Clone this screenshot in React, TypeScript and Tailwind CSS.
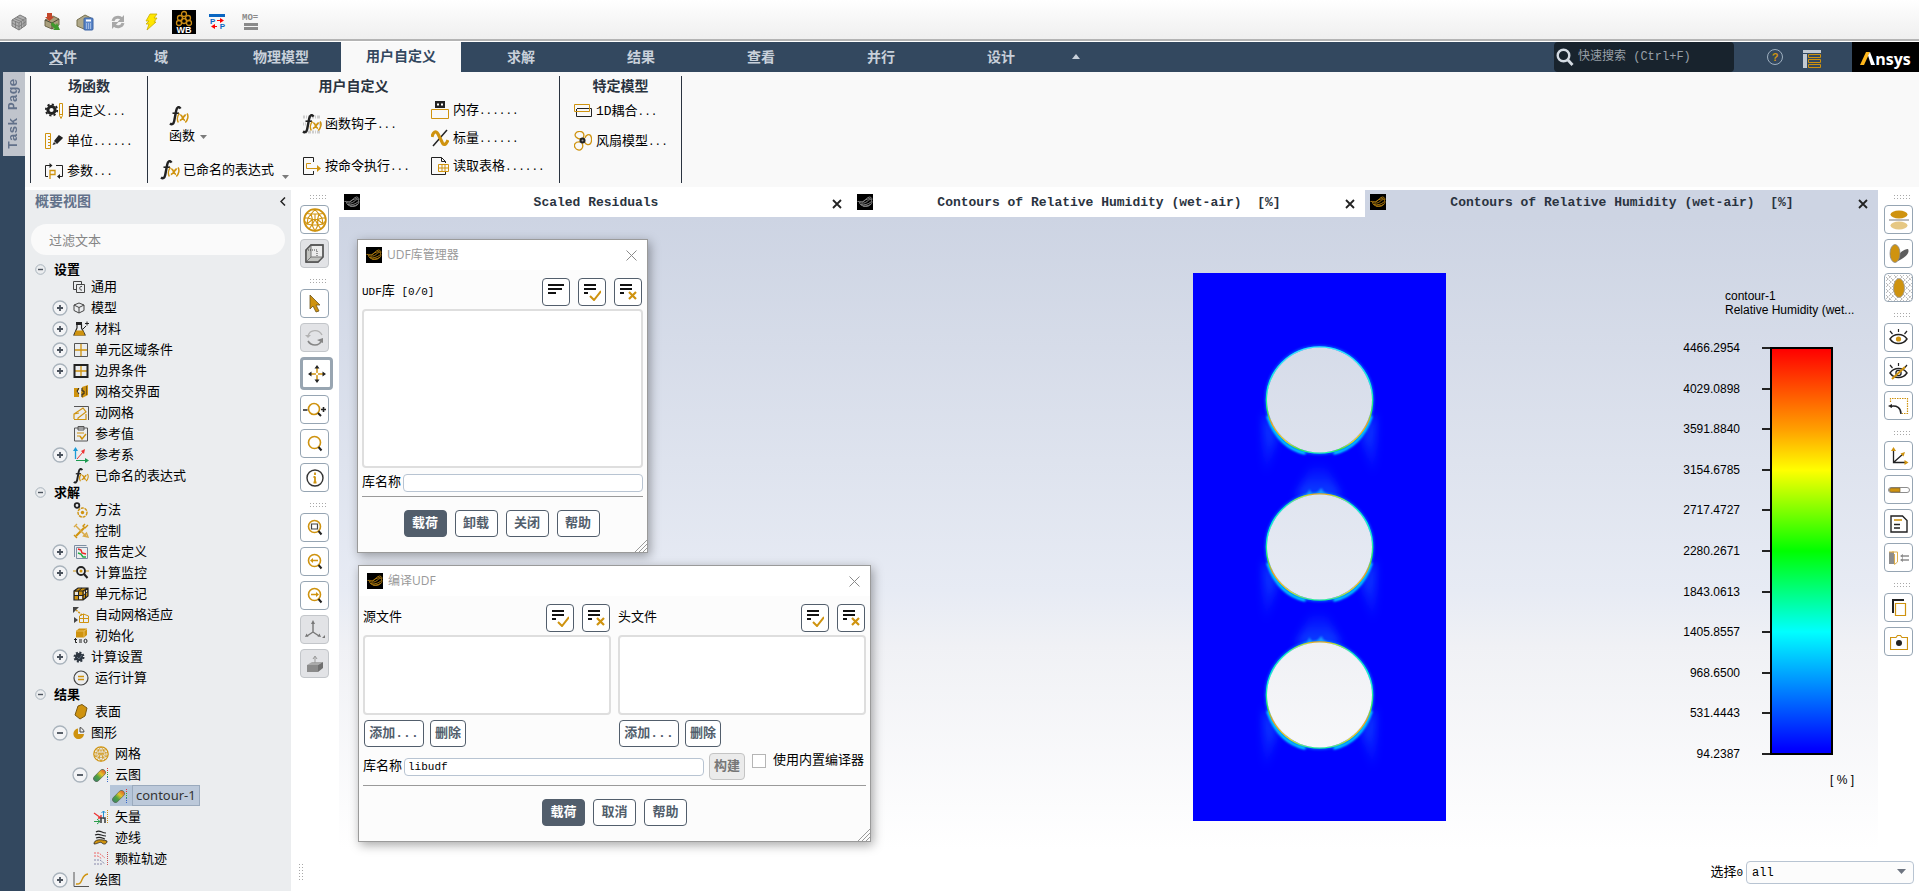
import type { ReactNode } from 'react';

const GOLD = '#cf930f';
const INK = '#222222';

type IconProps = {
  w?: number;
  h?: number;
  box?: string;
  children: ReactNode;
};

const Icon = ({ w = 16, h = w, box, children }: IconProps) => (
  <svg
    width={w}
    height={h}
    viewBox={box || `0 0 ${w} ${h}`}
    fill="none"
    className="shrink-0"
    aria-hidden="true"
  >
    {children}
  </svg>
);

/* ---------- shared drawings ---------- */

const FxIcon = ({ w = 20, bits = false }: { w?: number; bits?: boolean }) => (
  <Icon w={w} h={w} box="0 0 20 20">
    {bits && (
      <g stroke="#cdcdcd" strokeWidth="3">
        <path d="M1 3h18M1 18h18" strokeDasharray="2 1 1 1 3 1" />
        <path d="M1 10h3M17 10h3" strokeDasharray="1 1" />
      </g>
    )}
    <path d="M11.500 2.600C10-.2 7.800 1.400 7.200 4.500L5.200 15c-.6 3-2.300 4-4.200 2.500" stroke={INK} strokeWidth="2.400" />
    <path d="M3.500 7.200h6.500" stroke={INK} strokeWidth="1.600" />
    <path d="M10.500 7.500c-2.500 2.500-2.500 6.500-1.200 9M18 7.500c1.800 2.500.8 6.500-1.700 9" stroke={GOLD} strokeWidth="1.500" />
    <path d="M11.200 9.300c2.300-1 2.300 5 4.800 5M16.800 9c-2.500.3-3 5.500-6 5.500" stroke={GOLD} strokeWidth="1.800" />
  </Icon>
);

const AppIcon = ({ gold = true }: { gold?: boolean }) => (
  <Icon w={16}>
    <rect width="16" height="16" fill="#000" />
    <path
      d="M.5 7.500c3-.5 4 1 6 0s3-4 6-4.500c2 0 3 2 2 3.500 1 2 0 4-3 5.500-4 1-7 0-9-2.500M2 8.500c3 1 6 1 8-1s3-2 4.500-2M5.500 8c2-2 4-3 8-3.500M4 10.500c3 1 7 0 10.500-3M6 12c3 .5 5 0 8-2"
      stroke={gold ? '#b8810f' : '#8e8e8e'}
      strokeWidth=".9"
    />
  </Icon>
);

const MeshBall = ({ w = 24 }: { w?: number }) => (
  <Icon w={w} h={w} box="0 0 24 24">
    <circle cx="12" cy="12" r="10.800" stroke={GOLD} strokeWidth="1.800" />
    <path
      d="M12 1.500 8 6l-4.500-.5M12 1.500l4 4.500 4.500-.5M8 6h8M8 6l-3 4-3.500 0M8 6l1.500 5.500L5 10M16 6l-1.500 5.500-5 0M16 6l3 4 3.500 0M14.500 11.500 19 10M5 10l-1 6 5.500-4.500M19 10l1 6-5.500-4.500M4 16l5 1 .5-5.500M20 16l-5 1-.5-5.500M9 17l3-5.500 3 5.500zM9 17l-3 4M9 17l3 6 3-6 3 4M1.500 13 4 16M22.500 13 20 16M12 6v5.500"
      stroke={GOLD}
      strokeWidth="1.100"
    />
  </Icon>
);

const Lens = ({ children }: { children?: ReactNode }) => (
  <Icon w={22}>
    <circle cx="10.500" cy="9.500" r="6" stroke={GOLD} strokeWidth="1.600" />
    <path d="m14.500 14 3 3.500" stroke={INK} strokeWidth="2" />
    {children}
  </Icon>
);

const ContourIcon = () => (
  <Icon w={16}>
    <defs>
      <linearGradient id="pill" gradientUnits="userSpaceOnUse" x1="1" y1="14" x2="12" y2="2">
        <stop offset="0" stopColor="#3b7f6b" />
        <stop offset=".35" stopColor="#4fa23f" />
        <stop offset=".6" stopColor="#e3c32a" />
        <stop offset="1" stopColor="#d8452a" />
      </linearGradient>
    </defs>
    <path d="M3.500 11.500 9.500 5.500" stroke="#5c6a5a" strokeWidth="6.600" strokeLinecap="round" />
    <path d="M3.500 11.500 9.500 5.500" stroke="url(#pill)" strokeWidth="5.400" strokeLinecap="round" />
    <path d="M14.500 1v4" stroke="#d33" strokeDasharray="1 1" />
    <path d="M14.500 5v5" stroke="#3a3" strokeDasharray="1 1" />
    <path d="M14.500 10v5" stroke="#36c" strokeDasharray="1 1" />
  </Icon>
);

/* ---------- quick access bar ---------- */

const quickIcons: { label: string; icon: ReactNode }[] = [
  {
    label: 'Mesh',
    icon: (
      <Icon w={18}>
        <path d="M2 7 10 2l6 3v7l-7 5-7-4z" fill="#b0b0b0" stroke="#7c7c7c" />
        <path d="m2 7 7 3 7-5M9 10v7M4.500 5.700l7 3v6.500M7 4.200l7 3v6.500M2 10l7 3.500 7-5M5.500 8.500v6.500" stroke="#777" strokeWidth=".8" />
      </Icon>
    ),
  },
  {
    label: 'Import',
    icon: (
      <Icon w={18}>
        <path d="M2 7 10 3l6 3v6l-7 4-7-3z" fill="#a99f7c" stroke="#6f684c" />
        <path d="m2 7 7 3 7-4M9 10v6" stroke="#4d4935" />
        <path d="M4 0h5v4h2L6.500 8 2 4h2z" fill="#c4472b" />
        <path d="m9 9 4 3 1-2 3 7-7 0 1.500-1.500L8 12z" fill="#3f9a2c" />
      </Icon>
    ),
  },
  {
    label: 'Calculate',
    icon: (
      <Icon w={18}>
        <path d="M1 7 9 2l6 3v7l-7 4-7-3z" fill="#b0a98a" stroke="#77704f" />
        <rect x="8" y="5" width="9" height="12" rx="1" fill="#5b86c9" stroke="#3a62a3" />
        <path d="M10 7.500h5" stroke="#fff" strokeWidth="2" />
        <path d="M10 11h5M10 13h5M10 15h5" stroke="#dfe9f8" strokeDasharray="1 1" />
      </Icon>
    ),
  },
  {
    label: 'Refresh',
    icon: (
      <Icon w={18}>
        <path d="M4 8c1-4 6-5 9-2M14 10c-1 4-6 5-9 2" stroke="#a8a8a8" strokeWidth="3" />
        <path d="M15 2v7H8.500zM3 16V9h6.500z" fill="#a8a8a8" />
      </Icon>
    ),
  },
  {
    label: 'Run',
    icon: (
      <Icon w={18}>
        <path d="M8 1h7l-3 4h3l-3 4h2L5 17l2-6H4l3-3H4z" fill="#ffe600" stroke="#c9ad00" strokeWidth=".8" />
      </Icon>
    ),
  },
  {
    label: 'Workbench',
    icon: (
      <span className="relative flex size-6 shrink-0 items-end justify-center bg-black">
        <svg width="24" height="24" viewBox="0 0 24 24" fill="none" className="absolute inset-0" aria-hidden="true">
          <g stroke="#c98b14" strokeWidth="1.300">
            <circle cx="12" cy="4" r="2.500" />
            <circle cx="8" cy="8" r="2.500" />
            <circle cx="16" cy="8" r="2.500" />
            <circle cx="7" cy="13" r="2.500" />
            <circle cx="12" cy="11" r="2.500" />
            <circle cx="17" cy="13" r="2.500" />
          </g>
        </svg>
        <b className="relative font-['Liberation_Sans',sans-serif] text-[9px] leading-[8px] text-white">WB</b>
      </span>
    ),
  },
  {
    label: 'Parameters',
    icon: (
      <span className="relative block h-4 w-4 border-t-[3px] border-[#0a66c2] font-['Liberation_Sans',sans-serif] text-[8px] leading-[7px] font-bold text-[#0a66c2]">
        <span className="absolute top-px left-px">P</span>
        <span className="absolute right-0 bottom-0">P</span>
        <svg width="16" height="13" viewBox="0 0 16 13" className="absolute inset-0" aria-hidden="true">
          <path d="M8 3h3V1l4 2.500L11 6V4H8zM8 9H6V7L2 9.500 6 12v-2h2z" fill="#f00" />
        </svg>
      </span>
    ),
  },
  {
    label: 'Model',
    icon: (
      <span className="flex h-4 w-4 flex-col">
        <span className="font-['Liberation_Mono',monospace] text-[9px] leading-[8px] font-bold text-[#8a8a8a]">MO=</span>
        <span className="mt-px ml-0.5 h-[3px] bg-[#8a8a8a]" />
        <span className="mt-px ml-0.5 h-[3px] bg-[#8a8a8a]" />
      </span>
    ),
  },
];

const QuickBar = () => (
  <div className="flex h-[41px] shrink-0 items-center gap-[15px] border-b-2 border-[#b4b4b4] bg-linear-to-b from-white to-[#efefef] pt-1 pl-[10px]">
    {quickIcons.map((q) => (
      <button key={q.label} aria-label={q.label} className="flex h-6 w-[18px] items-center justify-center">
        {q.icon}
      </button>
    ))}
  </div>
);

/* ---------- menu bar ---------- */

const menus = ['域', '物理模型', '用户自定义', '求解', '结果', '查看', '并行', '设计'];

const MenuBar = () => (
  <nav className="mt-px flex h-[30px] shrink-0 items-stretch bg-[#33485f] text-sm font-bold text-[#c8d0da]">
    <button className="w-[101px] pt-0.5 pl-[25px]">
      <span className="underline underline-offset-2">文</span>件
    </button>
    {menus.map((m) => (
      <button key={m} className={m === '用户自定义' ? 'w-[120px] bg-[#f9f9f9] text-[#33485f]' : 'w-[120px] pt-0.5'}>
        {m}
      </button>
    ))}
    <button aria-label="collapse" className="flex w-[30px] items-center justify-center">
      <Icon w={8} h={6}>
        <path d="M4 0 8 5H0z" fill="#c8d0da" />
      </Icon>
    </button>
    <label className="ml-auto flex w-[180px] items-center gap-1 rounded bg-[#18232d] pl-0.5">
      <Icon w={18}>
        <circle cx="7.500" cy="7.500" r="5.800" stroke="#d3dae2" strokeWidth="2.400" />
        <path d="m11.500 11.500 5 5.500" stroke="#d3dae2" strokeWidth="2.800" />
      </Icon>
      <input
        aria-label="快速搜索"
        placeholder="快速搜索 (Ctrl+F)"
        className="w-full bg-transparent text-xs font-normal outline-none placeholder:text-[#98a0a8]"
      />
    </label>
    <button aria-label="help" className="ml-[33px] flex items-center">
      <span className="flex size-4 items-center justify-center rounded-full border border-[#9fb0c0] font-['Liberation_Sans',sans-serif] text-[11px] leading-none font-bold text-[#cf930f]">
        ?
      </span>
    </button>
    <button aria-label="layout" className="ml-5 flex items-center pt-1">
      <Icon w={18}>
        <path d="M0 1.500h18" stroke="#c3cad3" strokeWidth="3" />
        <path d="M2 4v14" stroke="#c3cad3" strokeWidth="4" />
        <path d="M5.500 4.500h12v3h-12zM5.500 9.500h12v3h-12zM5.500 14.500h12v3h-12z" stroke={GOLD} />
      </Icon>
    </button>
    <div className="ml-[31px] flex w-[67px] items-center justify-center bg-black pt-1 font-['Open_Sans',sans-serif] text-base leading-none text-white">
      <Icon w={15} h={14}>
        <path d="M0 13 6 0h4L4 13z" fill="#ffb71b" />
        <path d="M8 3.500 10 0l5 13h-4z" fill="#fff" />
      </Icon>
      nsys
    </div>
  </nav>
);

/* ---------- ribbon ---------- */

const Tool = ({ icon, text, dots = '' }: { icon: ReactNode; text: string; dots?: string }) => (
  <button className="flex h-5 items-center gap-1 whitespace-nowrap">
    <span className="flex w-[19px] justify-center">{icon}</span>
    <span className="pt-0.5">
      {text}
      <span className="text-[11px]">{dots}</span>
    </span>
  </button>
);

const Down = () => (
  <Icon w={7} h={4}>
    <path d="M0 0h7L3.500 4z" fill="#7b7b7b" />
  </Icon>
);

const GroupTitle = ({ children }: { children: ReactNode }) => (
  <h2 className="text-center text-sm leading-[22px] font-bold text-[#2a3340]">{children}</h2>
);

const Ribbon = () => (
  <div className="flex h-[115px] shrink-0 bg-[#f9f9f9] py-1 pl-[5px] text-[13px] text-black">
    <section className="w-[117px] border-l border-[#2a3340]">
      <GroupTitle>场函数</GroupTitle>
      <div className="flex flex-col gap-[10px] pt-[3px] pl-[13px]">
        <Tool
          text="自定义"
          dots="..."
          icon={
            <Icon w={18}>
              <circle cx="6.500" cy="8" r="3.600" stroke={INK} strokeWidth="3" />
              <circle cx="6.500" cy="8" r="5.700" stroke={INK} strokeWidth="1.800" strokeDasharray="2.200 2.200" />
              <path d="M14.500 1.500h3v12l-1.500 3-1.500-3zM14.500 12.500h3" stroke={GOLD} />
            </Icon>
          }
        />
        <Tool
          text="单位"
          dots="......"
          icon={
            <Icon w={18}>
              <path d="M.5 1.500h5v15h-5zM3 4.500h2M3 7.500h2M3 10.500h2M3 13.500h2" stroke={GOLD} />
              <path d="m10 9 4-5 3 2-5 5z" fill={INK} stroke={INK} strokeWidth="1.500" />
              <path d="m7.500 13 1.500-3 2 2z" fill={INK} />
            </Icon>
          }
        />
        <Tool
          text="参数"
          dots="..."
          icon={
            <Icon w={18}>
              <path d="M3 14.500H.500v-11H6M11 3.500h6.500v11H14" stroke={INK} />
              <path d="m4.500 1 3 2.500-3 2.500zM15 12l-3 2.500 3 2.500z" fill={INK} />
              <path d="M5 17V8.500h5v4H5" stroke={GOLD} strokeWidth="1.300" />
            </Icon>
          }
        />
      </div>
    </section>

    <section className="w-[412px] border-l border-[#2a3340]">
      <GroupTitle>用户自定义</GroupTitle>
      <div className="flex">
        <div className="w-[154px] pl-3">
          <button className="mt-2 ml-[9px] flex flex-col items-start leading-[22px]">
            <FxIcon />
            <span className="flex items-center gap-[5px]">
              函数 <Down />
            </span>
          </button>
          <div className="mt-3 flex items-end gap-2">
            <Tool text="已命名的表达式" icon={<FxIcon />} />
            <button aria-label="more" className="pb-px">
              <Down />
            </button>
          </div>
        </div>
        <div className="flex w-32 flex-col gap-[22px] pt-4">
          <Tool text="函数钩子" dots="..." icon={<FxIcon bits />} />
          <Tool
            text="按命令执行"
            dots="..."
            icon={
              <Icon w={18}>
                <path d="M10.500 5V.500H.500v17h10V14" stroke={INK} />
                <path d="M8 6.500H3.500v5H15" stroke={GOLD} />
                <path d="m14 8 4 3.500-4 3.500z" fill={GOLD} />
              </Icon>
            }
          />
        </div>
        <div className="flex flex-col gap-2 pt-0.5">
          <Tool
            text="内存"
            dots="......"
            icon={
              <Icon w={18}>
                <path d="M4 0h10v7H4z" fill={INK} />
                <path d="M6 2.500h2v2H6zM10 2.500h2v2h-2z" fill="#fff" />
                <path d="M.5 8.500h17v9H.500z" stroke={GOLD} />
              </Icon>
            }
          />
          <Tool
            text="标量"
            dots="......"
            icon={
              <Icon w={18}>
                <path d="M2 17 16 1" stroke={INK} strokeWidth="1.500" />
                <path d="M1 8c1-5 4-7 6-3l4 8c1.500 4 4 3 6-2" stroke={GOLD} strokeWidth="3.200" />
              </Icon>
            }
          />
          <Tool
            text="读取表格"
            dots="......"
            icon={
              <Icon w={18}>
                <path d="M14.500 6V4.500l-4-4H.500v17h14V15M10.500.500v4h4" stroke={INK} />
                <path d="M7.500 7.500h10v7h-10zM7.500 11h10M11 7.500v7M14 7.500v7" stroke={GOLD} />
              </Icon>
            }
          />
        </div>
      </div>
    </section>

    <section className="w-[123px] border-x border-[#2a3340]">
      <GroupTitle>特定模型</GroupTitle>
      <div className="flex flex-col gap-[10px] pt-[3px] pl-[13px]">
        <Tool
          text="1D耦合"
          dots="..."
          icon={
            <Icon w={18}>
              <path d="M2.500 7v7.500h15v-8H3" stroke={INK} />
              <path d="M.5 2.500h15v7H.500z" stroke={GOLD} />
            </Icon>
          }
        />
        <Tool
          text="风扇模型"
          dots="..."
          icon={
            <Icon w={18} h={20}>
              <g stroke={GOLD} strokeWidth="1.300">
                <path d="M7 8C3 8 0 5 1.500 2.500S8-.5 9.500 2.500c.7 1.700.5 3-.5 4.500" />
                <path d="M11 7c1-3 4-4.500 5.500-2.500s1.500 6 0 8-4.500 1.500-6-1.500" />
                <path d="M8 12c1 2 1.500 4-.5 6s-5 1-6.500-1.500 0-6 5-5.500" />
              </g>
              <circle cx="8.500" cy="9.500" r="3" fill={INK} />
              <circle cx="8.500" cy="9.500" r="1" fill="#999" />
            </Icon>
          }
        />
      </div>
    </section>
  </div>
);

/* ---------- outline tree ---------- */

type Node = {
  text: string;
  level?: 1 | 2 | 3;
  toggle?: '+' | '-';
  small?: boolean;
  selected?: boolean;
  icon: ReactNode;
};

const setup: Node[] = [
  {
    text: '通用',
    small: true,
    icon: (
      <Icon w={12}>
        <path d="M3 8.500H.500v-8h8V3M3.500 3.500h8v8h-8z" stroke="#444" />
        <path d="M9 5.500c-3-1-3 4.500 0 3.500" stroke="#444" />
      </Icon>
    ),
  },
  {
    text: '模型',
    toggle: '+',
    small: true,
    icon: (
      <Icon w={12}>
        <path d="m6 1 5 2v5.500L6 11 1 8.500V3zM1 3l5 2.500L11 3M6 5.500V11" stroke="#444" />
      </Icon>
    ),
  },
  {
    text: '材料',
    toggle: '+',
    icon: (
      <Icon w={16}>
        <path d="M3 2.500h6" stroke={INK} strokeWidth="3" />
        <path d="M4 3v4l-3 7h11L8.500 7V3" stroke={INK} strokeWidth="1.200" />
        <path d="M3 9.500h7l2 5H1z" fill={GOLD} />
        <path d="m10 8 3-3M12 2.500h4M14 .5v4" stroke={INK} />
      </Icon>
    ),
  },
  {
    text: '单元区域条件',
    toggle: '+',
    icon: (
      <Icon w={16}>
        <path d="M8 1v14M1 8h14" stroke={GOLD} strokeWidth="1.300" />
        <path d="M1.500 1.500h13v13h-13z" stroke="#555" />
      </Icon>
    ),
  },
  {
    text: '边界条件',
    toggle: '+',
    icon: (
      <Icon w={16}>
        <path d="M8 1v14M1 8h14" stroke={GOLD} strokeWidth="1.300" />
        <path d="M1.500 2h13v12h-13z" stroke={INK} strokeWidth="2" />
      </Icon>
    ),
  },
  {
    text: '网格交界面',
    icon: (
      <Icon w={16}>
        <path d="M1 4h5v2L4 8l2 2v3H1zM9 3l6-2v10l-6 3-1-5z" fill={GOLD} />
        <path d="M6 4 4 7l2 3M9 4v3h2v3H9v3" stroke={INK} />
        <path d="M13.500 2v9" stroke="#7a5a14" />
      </Icon>
    ),
  },
  {
    text: '动网格',
    icon: (
      <Icon w={16}>
        <path d="M1 1.500h14.500V15" stroke="#555" />
        <path d="M1 14V9l9-6 3 4-8 6v1.500h8V9M1 14.500h11M1 9l5-1" stroke={GOLD} strokeWidth="1.200" />
      </Icon>
    ),
  },
  {
    text: '参考值',
    icon: (
      <Icon w={16}>
        <path d="M1.500 2h13v13h-13zM5 .5h6V4H5z" stroke="#555" />
        <path d="M4 7h7M4 10h3" stroke={GOLD} />
        <path d="m7 10 2 3 4-5" stroke={GOLD} strokeWidth="1.400" />
      </Icon>
    ),
  },
  {
    text: '参考系',
    toggle: '+',
    icon: (
      <Icon w={16}>
        <path d="M2.500 12V3" stroke="#1a9ad6" strokeWidth="1.300" />
        <path d="M2.500 0 5 4H0z" fill="#1a9ad6" />
        <path d="m4 12 6-7" stroke="#e33" />
        <path d="m12 2-1 5-3-3z" fill="#e33" />
        <path d="M3 13.500h9" stroke="#1b9a50" />
        <path d="m16 13.500-4 2.500v-5z" fill="#1b9a50" />
      </Icon>
    ),
  },
  { text: '已命名的表达式', icon: <FxIcon w={16} /> },
];

const solve: Node[] = [
  {
    text: '方法',
    icon: (
      <Icon w={16}>
        <circle cx="4" cy="3.500" r="2.300" stroke={INK} strokeWidth="1.800" />
        <circle cx="9.500" cy="10.500" r="4.500" stroke={GOLD} strokeWidth="1.400" strokeDasharray="3 .8" />
        <circle cx="9.500" cy="10.500" r="1.700" fill={GOLD} />
      </Icon>
    ),
  },
  {
    text: '控制',
    icon: (
      <Icon w={16}>
        <path d="m3 13 8-8" stroke={GOLD} strokeWidth="2.200" />
        <path d="m15 2-3 3-2-2 2-2M1 12l3 3" stroke={GOLD} strokeWidth="1.400" />
        <path d="m3 3 10 10" stroke="#d9aa48" strokeWidth="1.500" />
        <path d="m1 4 3-3M10.500 13l3-3 1.500 4z" stroke="#d9aa48" strokeWidth="1.400" />
      </Icon>
    ),
  },
  {
    text: '报告定义',
    toggle: '+',
    icon: (
      <Icon w={16}>
        <path d="M1.500 13V1.500h12M3.500 3.500h11v11h-11z" stroke="#7c8ea3" />
        <path d="m5 5 3 1 1 3 4 1" stroke="#e22" strokeWidth="1.400" />
        <path d="m5 9 3 1 2 3h3" stroke="#2a4" strokeWidth="1.400" />
      </Icon>
    ),
  },
  {
    text: '计算监控',
    toggle: '+',
    icon: (
      <Icon w={16}>
        <path d="M0 6h3M13 6h3" stroke={GOLD} />
        <circle cx="8" cy="6" r="4" stroke={INK} strokeWidth="1.800" />
        <circle cx="8" cy="6" r="1.500" fill={GOLD} />
        <path d="m11 9 3.500 4" stroke={INK} strokeWidth="2" />
      </Icon>
    ),
  },
  {
    text: '单元标记',
    icon: (
      <Icon w={16}>
        <path d="M1 5h9v9H1zM1 5l4-3h10v8l-5 4M10 5l5-3" fill={GOLD} stroke={INK} strokeWidth="1.200" />
        <path d="M2 6h3v3H2zM6 10h3v3H6zM11 6l3-2v3l-3 2z" fill="#e4e4e4" />
        <path d="M5.500 5v9M1 9.500h9l5-4M5.500 5 9 2M12.500 3.500v9" stroke={INK} />
      </Icon>
    ),
  },
  {
    text: '自动网格适应',
    icon: (
      <Icon w={16}>
        <path d="M0 0h6L0 6zM1 10l4 3-4 3z" fill="#444" />
        <path d="m3 3 6 5" stroke={GOLD} strokeDasharray="2 1" strokeWidth="1.500" />
        <path d="M6.500 15.500V9l4-2 5 2v6.500zM6 11.500h9M10.500 7v8" stroke={GOLD} />
      </Icon>
    ),
  },
  {
    text: '初始化',
    icon: (
      <Icon w={16}>
        <path d="M3 3 6 .5h8V7l-3 2.500H3z" fill={GOLD} />
        <path d="M3 3h8v6M11 3l3-2" stroke="#e9bd5b" />
        <path d="M2.500 10v4.500H4M1 11.500h3M6 12h3M6 14h3" stroke={INK} />
        <ellipse cx="12.500" cy="13" rx="1.500" ry="1.800" stroke={INK} />
      </Icon>
    ),
  },
  {
    text: '计算设置',
    toggle: '+',
    small: true,
    icon: (
      <Icon w={12}>
        <circle cx="6" cy="6" r="4" fill="#2d3640" />
        <circle cx="6" cy="6" r="4.500" stroke="#2d3640" strokeWidth="2" strokeDasharray="2 1.500" />
        <path d="m4 6 2 2 3-4" stroke="#5d6b7a" />
      </Icon>
    ),
  },
  {
    text: '运行计算',
    icon: (
      <Icon w={16}>
        <circle cx="8" cy="8" r="7" stroke="#444" strokeWidth="1.200" />
        <path d="M5 6.500h6M5 9.500h6" stroke={GOLD} strokeWidth="1.400" />
      </Icon>
    ),
  },
];

const results: Node[] = [
  {
    text: '表面',
    icon: (
      <Icon w={16}>
        <path d="m5 2 4-1.500L14 4l-2 8-5 3-5-4z" fill={GOLD} stroke="#7a5a14" />
      </Icon>
    ),
  },
  {
    text: '图形',
    toggle: '-',
    small: true,
    icon: (
      <Icon w={12}>
        <path d="M5 1.500V7h6a5.300 5.300 0 1 1-6-5.500z" fill={GOLD} />
        <path d="M7 .5V5h4C11 3 9 1 7 .5z" stroke="#444" />
      </Icon>
    ),
  },
  { text: '网格', level: 2, icon: <MeshBall w={16} /> },
  { text: '云图', level: 2, toggle: '-', icon: <ContourIcon /> },
  { text: 'contour-1', level: 3, selected: true, icon: <ContourIcon /> },
  {
    text: '矢量',
    level: 2,
    icon: (
      <Icon w={16}>
        <path d="m1 4 7 5M5 9h3V6" stroke="#e33" strokeWidth="1.300" />
        <path d="M1 12.500h6M4 10l3 2.500L4 15" stroke="#2a9d4a" />
        <path d="M10.500 2v8M8.500 4l2-2 2 2" stroke="#248ed0" />
        <path d="M8 14V9h4v5" stroke="#444" strokeWidth="1.600" />
        <path d="M14.500 1v14" stroke={GOLD} strokeDasharray="1 1" />
      </Icon>
    ),
  },
  {
    text: '迹线',
    level: 2,
    icon: (
      <Icon w={16}>
        <path d="M3 2c4-3 5 1 10 1M2 5c5-2 6 1 11 1M3 8c4-2 6 0 9 1" stroke={INK} strokeWidth="1.200" />
        <path d="M1 14c0-5 7-5 13-3 0 3-3 4-5 2s-4 1-8 1z" fill={GOLD} stroke={INK} strokeWidth=".8" />
      </Icon>
    ),
  },
  {
    text: '颗粒轨迹',
    level: 2,
    icon: (
      <Icon w={16}>
        <path d="M1 2h5l6 5M1 5h4l4 3" stroke="#e66" strokeDasharray="2 1" />
        <path d="M1 9h6l5 4M1 13h8" stroke="#88a" strokeDasharray="2 1" />
        <path d="M14.500 1v14" stroke="#c55" strokeDasharray="1 1" />
      </Icon>
    ),
  },
  {
    text: '绘图',
    toggle: '+',
    icon: (
      <Icon w={16}>
        <path d="M1 0v14.500h15" stroke="#555" />
        <path d="M3 12c8 1 4-9 12-10" stroke={GOLD} strokeWidth="1.400" />
      </Icon>
    ),
  },
];

const Toggle = ({ sign }: { sign: '+' | '-' }) => (
  <button aria-label={sign === '+' ? 'expand' : 'collapse'} className="shrink-0">
    <Icon w={16}>
      <circle cx="8" cy="8" r="7" stroke="#a9b3bc" strokeWidth="1.300" fill="#f3f4f6" />
      <path d={sign === '+' ? 'M5 8h6M8 5v6' : 'M5 8h6'} stroke="#4a525c" strokeWidth="1.800" />
    </Icon>
  </button>
);

const indent = { 1: 'pl-[27px]', 2: 'pl-[47px]', 3: 'pl-[67px]' };

const TreeRow = ({ node }: { node: Node }) => (
  <li className={`flex h-[21px] items-center ${indent[node.level || 1]}`}>
    {node.toggle ? <Toggle sign={node.toggle} /> : <span className="w-4 shrink-0" />}
    {node.selected ? (
      <span className="ml-0.5 flex h-[21px] items-center bg-[#b5c5d9] pl-0.5">
        {node.icon}
        <span className="ml-1 border border-[#9aaabd] bg-[#bcc9da] px-[3px] leading-[19px] text-[#333]">{node.text}</span>
      </span>
    ) : (
      <>
        <span className="ml-[5px]">{node.icon}</span>
        <span className="ml-1.5 leading-[21px]">{node.text}</span>
      </>
    )}
  </li>
);

const TreeSection = ({ title, nodes }: { title: string; nodes: Node[] }) => (
  <section>
    <h3 className="flex h-[13px] items-center gap-2 pl-[10px] text-[13px] leading-[13px] font-bold">
      <Icon w={11}>
        <circle cx="5.500" cy="5.500" r="4.800" stroke="#a9b3bc" />
        <path d="M3 5.500h5" stroke="#4a525c" strokeWidth="1.400" />
      </Icon>
      {title}
    </h3>
    <ul>
      {nodes.map((n) => (
        <TreeRow key={n.text} node={n} />
      ))}
    </ul>
  </section>
);

const Outline = () => (
  <aside className="w-[266px] shrink-0 overflow-hidden bg-[#ebedef] font-['Noto_Sans','Noto_Sans_CJK_SC',sans-serif] text-[13px] text-black">
    <div className="flex h-[22px] items-center justify-between pr-[5px] pl-[10px]">
      <h2 className="text-sm font-bold text-[#62718a]">概要视图</h2>
      <button aria-label="hide outline">
        <Icon w={6} h={9}>
          <path d="M5 .5 1 4.500l4 4" stroke="#222" strokeWidth="1.500" />
        </Icon>
      </button>
    </div>
    <div className="px-1.5 pt-3 pb-2">
      <input
        aria-label="过滤文本"
        placeholder="过滤文本"
        className="h-[31px] w-full rounded-full bg-[#fafafa] px-[18px] outline-none placeholder:text-[#858585]"
      />
    </div>
    <TreeSection title="设置" nodes={setup} />
    <TreeSection title="求解" nodes={solve} />
    <TreeSection title="结果" nodes={results} />
  </aside>
);

/* ---------- side tool strips ---------- */

type StripItem = { label: string; state?: 'off' | 'on'; icon: ReactNode };

const Grip = () => (
  <Icon w={17} h={5}>
    <path d="M0 .5h17M0 3.500h17" stroke="#a8a8a8" strokeDasharray="1 2" />
  </Icon>
);

const stripStyle = {
  off: 'size-[29px] border border-[#c3c6ca] bg-[#e2e3e6]',
  on: 'size-[33px] border-[3px] border-[#98a5b1] bg-white',
  idle: 'size-[29px] border border-[#96a5b3] bg-white',
};

const Strip = ({ groups }: { groups: StripItem[][] }) => (
  <div className="flex shrink-0 flex-col gap-[11px] pt-[5px]">
    {groups.map((g, i) => (
      <div key={i} className="flex flex-col items-start gap-[5px]">
        <span className="pl-[10px] leading-none">
          <Grip />
        </span>
        {g.map((b) => (
          <button
            key={b.label}
            aria-label={b.label}
            className={`flex items-center justify-center rounded ${stripStyle[b.state || 'idle']}`}
          >
            {b.icon}
          </button>
        ))}
      </div>
    ))}
  </div>
);

const viewTools: StripItem[][] = [
  [
    { label: 'mesh', icon: <MeshBall /> },
    {
      label: 'box',
      state: 'off',
      icon: (
        <Icon w={20}>
          <path d="M1 6v12h12l5-5V1H6z" fill="#ececec" stroke="#555" strokeWidth="1.300" />
          <path d="M1 6v12l5-5V1zM1 18h12l5-5H6z" fill="#c2c3c0" stroke="#777" />
          <path d="M1 6h11v7" stroke="#444" strokeDasharray="1 1" />
          <path d="M1 6v12h12l5-5V1H6z" stroke="#555" strokeWidth="1.300" />
        </Icon>
      ),
    },
  ],
  [
    {
      label: 'select',
      icon: (
        <Icon w={20}>
          <path d="M5 1v14l3-3 3 6 3-1-3-6h4z" fill={GOLD} stroke="#6d531a" strokeWidth=".8" />
        </Icon>
      ),
    },
    {
      label: 'rotate',
      state: 'off',
      icon: (
        <Icon w={20}>
          <path d="M3 8c2-7 11-7 14-1" stroke="#b2b2b2" strokeWidth="1.400" />
          <path d="M0 7h6L3 10z" fill="#b2b2b2" />
          <path d="M3 13c3 5 11 6 14-1" stroke="#858585" strokeWidth="1.600" />
          <path d="m12 12 6-2v5z" fill="#858585" />
        </Icon>
      ),
    },
    {
      label: 'pan',
      state: 'on',
      icon: (
        <Icon w={18}>
          <path d="M9 2v14M2 9h14" stroke={GOLD} strokeWidth="1.500" />
          <path d="m9 0 2.500 3.500h-5zM9 18l2.500-3.500h-5zM0 9l3.500-2.500v5zM18 9l-3.500-2.500v5z" fill={INK} />
          <circle cx="9" cy="9" r="1.200" fill="#fff" />
        </Icon>
      ),
    },
    {
      label: 'zoom drag',
      icon: (
        <Icon w={25} h={20}>
          <circle cx="12" cy="9" r="5.500" stroke={GOLD} strokeWidth="1.600" />
          <path d="M1 10h4.500M19 9.500h5M21.500 7v5" stroke={INK} strokeWidth="1.600" />
          <path d="m16 13 3 3" stroke={INK} strokeWidth="2" />
        </Icon>
      ),
    },
    { label: 'zoom', icon: <Lens /> },
    {
      label: 'info',
      icon: (
        <Icon w={18}>
          <circle cx="9" cy="9" r="8" stroke="#333" strokeWidth="1.400" />
          <path d="M9 3.500V6M9 7.500v6M7.500 13.500h3M7.500 8H9" stroke={GOLD} strokeWidth="1.800" />
        </Icon>
      ),
    },
  ],
  [
    {
      label: 'fit',
      icon: (
        <Lens>
          <path d="M7.500 7h6v5h-6z" stroke="#444" strokeWidth="1.200" />
        </Lens>
      ),
    },
    {
      label: 'previous view',
      icon: (
        <Lens>
          <path d="M8 9.500h6" stroke={GOLD} strokeWidth="1.500" />
          <path d="m6 9.500 3-2.500v5z" fill={GOLD} />
        </Lens>
      ),
    },
    {
      label: 'next view',
      icon: (
        <Lens>
          <path d="M7 9.500h6" stroke={GOLD} strokeWidth="1.500" />
          <path d="m15 9.500-3-2.500v5z" fill={GOLD} />
        </Lens>
      ),
    },
    {
      label: 'axes',
      state: 'off',
      icon: (
        <Icon w={22}>
          <path d="M9 4v9l-6 4M9 13l6 4" stroke="#777" strokeWidth="1.400" />
          <path d="m9 1 2 4H7zM1 18l1.500-3.500 2 3zM17 18l-3.500-.5 2-3zM21 19v-3l-3 3z" fill="#777" />
        </Icon>
      ),
    },
    {
      label: 'isometric',
      state: 'off',
      icon: (
        <Icon w={20}>
          <path d="M2 11h11v7H2z" fill="#8b8b8b" />
          <path d="m2 11 5-3h11l-5 3z" fill="#aaa" />
          <path d="m13 11 5-3v6l-5 4z" fill="#707070" />
          <path d="M10 9V3M8 5l2-3 2 3" stroke="#999" />
        </Icon>
      ),
    },
  ],
];

const eye = (
  <>
    <path d="M2 11c4-6 13-6 17 0-4 6-13 6-17 0z" stroke={INK} strokeWidth="1.400" />
    <path d="M10.500 4V1M4.500 6 2 3M16.500 6 19 3" stroke={INK} strokeWidth="1.200" />
  </>
);

const displayTools: StripItem[][] = [
  [
    {
      label: 'reflection',
      icon: (
        <Icon w={22}>
          <ellipse cx="11" cy="5.500" rx="8.500" ry="4" fill={GOLD} />
          <path d="M1 11h20" stroke="#777" />
          <ellipse cx="11" cy="16.500" rx="8.500" ry="4" fill="#e6c884" />
        </Icon>
      ),
    },
    {
      label: 'shadow',
      icon: (
        <Icon w={22}>
          <path d="M10 18c0-8 4-11 10-12 2 4-2 8-10 12z" fill="#5d5d5d" />
          <ellipse cx="7" cy="10.500" rx="5" ry="9" fill={GOLD} stroke="#888" strokeWidth=".8" />
        </Icon>
      ),
    },
    {
      label: 'ground',
      icon: (
        <Icon w={26}>
          <path
            d="m0 6 6-6M0 12 12 0M0 18 18 0M0 24 24 0M2 26 26 2M8 26 26 8M14 26l12-12M20 26l6-6M20 0l6 6M14 0l12 12M8 0l18 18M2 0l24 24M0 2l24 24M0 8l18 18M0 14l12 12M0 20l6 6"
            stroke="#aaa"
            strokeWidth=".8"
            strokeDasharray="3 1"
          />
          <ellipse cx="13" cy="13" rx="5.500" ry="9.500" fill={GOLD} stroke="#999" strokeWidth=".8" />
        </Icon>
      ),
    },
  ],
  [
    {
      label: 'show',
      icon: (
        <Icon w={21} h={19}>
          {eye}
          <circle cx="10.500" cy="11" r="2.600" fill={GOLD} />
        </Icon>
      ),
    },
    {
      label: 'hide',
      icon: (
        <Icon w={21} h={19}>
          {eye}
          <circle cx="10.500" cy="11" r="2.600" stroke={INK} strokeWidth="1.300" />
          <path d="M4 17 17 5" stroke={GOLD} strokeWidth="2" />
        </Icon>
      ),
    },
    {
      label: 'undo selection',
      icon: (
        <Icon w={21} h={20}>
          <path d="M2.500 6V2.500h17v15H14" stroke={GOLD} strokeWidth="1.200" strokeDasharray="1.500 1" />
          <path d="M2 10.500c7-1.500 11 1.500 11 7.500" stroke={INK} strokeWidth="1.500" />
          <path d="m0 10 4-2v4z" fill={INK} />
        </Icon>
      ),
    },
  ],
  [
    {
      label: 'triad',
      icon: (
        <Icon w={20}>
          <path d="M4.500 4v12.500H17M5 16 14 8" stroke={INK} strokeWidth="1.300" />
          <path d="m4.500 1 2.500 4H2zM19.500 16.500l-4 2.500v-5zM16 6l-1.500 4.500-3-3z" fill={GOLD} />
        </Icon>
      ),
    },
    {
      label: 'progress',
      icon: (
        <Icon w={22} h={6}>
          <rect x=".5" y=".5" width="21" height="5" rx="2.500" stroke="#8d8d8d" />
          <path d="M3.500 1H12v4H3.500a2 2 0 0 1 0-4z" fill={GOLD} stroke="#7c6536" strokeWidth=".7" />
        </Icon>
      ),
    },
    {
      label: 'text',
      icon: (
        <Icon w={18}>
          <path d="M1 1h11.500L17 5.500V17H1z" stroke={INK} strokeWidth="1.400" />
          <path d="M4 5h8" stroke={GOLD} strokeWidth="1.600" />
          <path d="M4 9.500h6M4 13h6" stroke={INK} strokeWidth="1.300" />
        </Icon>
      ),
    },
    {
      label: 'section',
      icon: (
        <Icon w={20} h={14}>
          <path d="M0 1h5v12H0z" fill="#8d8d8d" />
          <path d="M5.500 3v10.500L8.500 11V1H3M0 1h5" stroke="#dcae4e" />
          <path d="M12 5h8M12 9h8" stroke="#8d8d8d" strokeWidth="1.300" />
          <path d="m11 5 3-2v4zM11 9l3-2v4z" fill="#8d8d8d" />
        </Icon>
      ),
    },
  ],
  [
    {
      label: 'copy',
      icon: (
        <Icon w={16} h={17}>
          <path d="M2 14V1h11" stroke={INK} strokeWidth="2" />
          <path d="M4.500 4.500h10v12h-10z" stroke={GOLD} strokeWidth="1.200" />
        </Icon>
      ),
    },
    {
      label: 'snapshot',
      icon: (
        <Icon w={18} h={16}>
          <path d="M.5 3.500H6l1.500-2h3l1.500 2h5.500v12H.5z" stroke={GOLD} strokeWidth="1.200" />
          <circle cx="9" cy="9" r="3" fill={INK} />
        </Icon>
      ),
    },
  ],
];

/* ---------- graphics tabs ---------- */

const views = ['Scaled Residuals', 'Contours of Relative Humidity (wet-air)  [%]', 'Contours of Relative Humidity (wet-air)  [%]'];

const ViewTabs = () => (
  <div className="flex h-[27px] shrink-0">
    {views.map((v, i) => (
      <div key={i} className={`flex flex-1 items-start px-[5px] pt-1 ${i === 2 ? 'bg-[#cdd4e3]' : 'bg-white'}`}>
        <AppIcon gold={i === 2} />
        <button className="flex-1 text-center text-[13px] leading-[18px] font-bold whitespace-pre text-[#2a3340]">{v}</button>
        <button aria-label="close view" className="pt-[5px] pr-[5px]">
          <Icon w={10}>
            <path d="m1 1 8 8M9 1 1 9" stroke="#222" strokeWidth="1.800" />
          </Icon>
        </button>
      </div>
    ))}
  </div>
);

/* ---------- contour plot ---------- */

const tubes = [127, 274, 422];

const ContourPlot = () => (
  <svg width="253" height="548" viewBox="0 0 253 548" fill="none" className="absolute top-14 right-[432px]" role="img" aria-label="contour-1">
    <defs>
      <mask id="holes">
        <rect width="253" height="548" fill="#fff" />
        {tubes.map((cy) => (
          <circle key={cy} cx="126.500" cy={cy} r="52.500" fill="#000" />
        ))}
      </mask>
      <filter id="soft" x="-50%" y="-50%" width="200%" height="200%">
        <feGaussianBlur stdDeviation="4" />
      </filter>
      <filter id="glow" x="-20%" y="-20%" width="140%" height="140%">
        <feGaussianBlur stdDeviation="1" />
      </filter>
      <linearGradient id="rimA" x1="0" y1="0" x2="0" y2="1">
        <stop offset="0" stopColor="#2fe8ff" />
        <stop offset=".4" stopColor="#12f2d0" />
        <stop offset=".6" stopColor="#2cf060" />
        <stop offset=".72" stopColor="#f0a020" />
        <stop offset=".9" stopColor="#e8e020" />
        <stop offset=".97" stopColor="#30f040" />
        <stop offset="1" stopColor="#20f0c0" />
      </linearGradient>
      <linearGradient id="rimB" x1="0" y1="0" x2="0" y2="1">
        <stop offset="0" stopColor="#f0a020" />
        <stop offset=".02" stopColor="#b0f030" />
        <stop offset=".1" stopColor="#12f2c0" />
        <stop offset=".4" stopColor="#12f2d0" />
        <stop offset=".6" stopColor="#2cf060" />
        <stop offset=".74" stopColor="#f0a020" />
        <stop offset=".92" stopColor="#e8e020" />
        <stop offset="1" stopColor="#20f0a0" />
      </linearGradient>
      <linearGradient id="wake" x1="0" y1="0" x2="0" y2="1">
        <stop offset="0" stopColor="#1e90ff" />
        <stop offset="1" stopColor="#1e90ff" stopOpacity="0" />
      </linearGradient>
      <linearGradient id="plume" x1="0" y1="1" x2="0" y2="0">
        <stop offset="0" stopColor="#1e90ff" />
        <stop offset="1" stopColor="#1e90ff" stopOpacity="0" />
      </linearGradient>
    </defs>
    <g mask="url(#holes)">
      <rect width="253" height="548" fill="#00f" />
      {tubes.map((cy, i) => (
        <g key={cy} transform={`translate(126.500 ${cy})`}>
          <path d="M-55 12c-2 20-2 45 1 66l12-40zM55 12c2 20 2 45-1 66L42 38z" fill="url(#wake)" filter="url(#soft)" opacity=".55" />
          {i > 0 && (
            <>
              <path d="M-24-50-8-84H6l16 34z" fill="url(#plume)" filter="url(#soft)" opacity=".5" />
              <path d="M-18-51c6-1 7-4 8-7 2 5 3 5 5 5s5-4 7-6c2 5 5 7 12 8z" fill="#20c0ff" opacity=".7" filter="url(#glow)" />
            </>
          )}
          <circle r="53.500" stroke="#00b4ff" strokeWidth="2.500" opacity=".5" filter="url(#glow)" />
          <path d="M-52 16c6 18 18 33 38 37.500M52 16c-6 18-18 33-38 37.500" stroke="#00e0ff" strokeWidth="2.500" filter="url(#glow)" />
          <circle r="53" stroke={i === 0 ? 'url(#rimA)' : 'url(#rimB)'} strokeWidth="1.600" />
        </g>
      ))}
    </g>
  </svg>
);

const levels = [
  '4466.2954',
  '4029.0898',
  '3591.8840',
  '3154.6785',
  '2717.4727',
  '2280.2671',
  '1843.0613',
  '1405.8557',
  '968.6500',
  '531.4443',
  '94.2387',
];

const Legend = () => (
  <div className="absolute top-[72px] right-6 w-[172px] font-['Liberation_Sans',sans-serif] text-xs leading-[14px] text-black">
    <p className="pl-[43px]">contour-1</p>
    <p className="pl-[43px] whitespace-nowrap">Relative Humidity (wet...</p>
    <div className="mt-6 flex h-[420px] justify-end pr-[21px]">
      <ul className="flex flex-col justify-between text-right">
        {levels.map((l) => (
          <li key={l} className="flex items-center justify-end gap-[22px]">
            {l}
            <span className="h-0.5 w-2 bg-[#222]" />
          </li>
        ))}
      </ul>
      <div className="my-[6px] w-[63px] border-2 border-black bg-[linear-gradient(to_bottom,#f00_0%,#ff6000_12%,#ffa000_20%,#ff0_30%,#0f0_50%,#0ff_70%,#0050ff_90%,#00f_99%)]" />
    </div>
    <p className="mt-3 text-right">[ % ]</p>
  </div>
);

/* ---------- dialogs ---------- */

const ListIcon = ({ mark }: { mark?: 'check' | 'cross' }) => (
  <Icon w={18}>
    <path d={mark ? 'M1 2h12M1 6h12M1 10h4' : 'M1 2h16M1 6h14M1 10h8'} stroke="#111" strokeWidth="2" />
    {mark === 'check' && <path d="m7 13 4 4 7-9" stroke={GOLD} strokeWidth="2" />}
    {mark === 'cross' && <path d="m10 9 7 7M17 9l-7 7" stroke={GOLD} strokeWidth="2.200" />}
  </Icon>
);

const ListButton = ({ mark }: { mark?: 'check' | 'cross' }) => (
  <button
    aria-label={mark === 'check' ? 'select all' : mark === 'cross' ? 'deselect all' : 'toggle list'}
    className="flex size-7 items-center justify-center rounded border border-[#525e6c] bg-white"
  >
    <ListIcon mark={mark} />
  </button>
);

const DialogButton = ({ children, primary, className = 'w-[43px]' }: { children: ReactNode; primary?: boolean; className?: string }) => (
  <button
    className={`h-[27px] rounded border border-[#525e6c] text-[13px] leading-none font-bold whitespace-nowrap ${primary ? 'bg-[#525e6c] text-white' : 'bg-white text-[#525e6c]'} ${className}`}
  >
    {children}
  </button>
);

const Dialog = ({ title, className, children }: { title: string; className: string; children: ReactNode }) => (
  <section
    aria-label={title}
    className={`absolute border border-[#9a9a9a] bg-[#fcfcfc] text-[13px] text-black shadow-[2px_3px_10px_rgba(0,0,0,0.35)] ${className}`}
  >
    <header className="flex h-[30px] items-center bg-white pr-[10px] pl-2">
      <AppIcon />
      <h2 className="ml-[5px] font-['Open_Sans','Noto_Sans_CJK_SC',sans-serif] text-xs text-[#999]">{title}</h2>
      <button aria-label="close" className="ml-auto">
        <Icon w={11}>
          <path d="m.5.500 10 10M10.500.500l-10 10" stroke="#8a8a8a" />
        </Icon>
      </button>
    </header>
    {children}
    <svg width="12" height="12" viewBox="0 0 12 12" className="absolute right-0 bottom-0" aria-hidden="true">
      <path d="M0 12 12 0M4 12l8-8M8 12l4-4" stroke="#9a9a9a" />
    </svg>
  </section>
);

const ListBox = ({ label, className }: { label: string; className: string }) => (
  <div role="listbox" aria-label={label} className={`rounded border-2 border-[#dedede] bg-white ${className}`} />
);

const field = 'h-[18px] min-w-0 flex-1 rounded border border-[#b8c4d2] bg-white px-[3px] text-[11px] outline-none';

const LibraryDialog = () => (
  <Dialog title="UDF库管理器" className="top-[22px] left-[18px] w-[291px]">
    <div className="px-1 pt-2 pb-[15px]">
      <div className="flex items-center gap-2 pr-px">
        <span className="mr-auto">
          <span className="text-[11px]">UDF</span>库<span className="text-[11px]"> [0/0]</span>
        </span>
        <ListButton />
        <ListButton mark="check" />
        <ListButton mark="cross" />
      </div>
      <ListBox label="UDF库" className="mt-[3px] h-[159px]" />
      <label className="mt-1.5 flex items-center gap-0.5 border-b border-[#9a9a9a] pb-1 leading-[18px]">
        库名称
        <input className={field} />
      </label>
      <div className="mt-[13px] flex justify-center gap-2 pr-0.5">
        <DialogButton primary>载荷</DialogButton>
        <DialogButton>卸载</DialogButton>
        <DialogButton>关闭</DialogButton>
        <DialogButton>帮助</DialogButton>
      </div>
    </div>
  </Dialog>
);

const FileColumn = ({ label }: { label: string }) => (
  <div className="flex-1">
    <div className="flex items-center gap-2 pr-px">
      <span className="mr-auto">{label}</span>
      <ListButton mark="check" />
      <ListButton mark="cross" />
    </div>
    <ListBox label={label} className="mt-[3px] h-20" />
    <div className="mt-[5px] flex gap-1.5 pl-px">
      <DialogButton className="w-[60px]">添加...</DialogButton>
      <DialogButton className="w-9">删除</DialogButton>
    </div>
  </div>
);

const CompileDialog = () => (
  <Dialog title="编译UDF" className="top-[348px] left-[19px] w-[513px]">
    <div className="px-1 pt-2 pb-[15px]">
      <div className="flex gap-[7px]">
        <FileColumn label="源文件" />
        <FileColumn label="头文件" />
      </div>
      <div className="mt-1.5 flex items-center border-b border-[#9a9a9a] pb-[5px]">
        <label className="flex flex-1 items-center gap-0.5">
          库名称
          <input className={field} defaultValue="libudf" />
        </label>
        <button disabled className="ml-[5px] h-[27px] w-9 rounded border border-[#c4c4c4] bg-[#ebebeb] text-[13px] leading-none font-bold whitespace-nowrap text-[#777]">
          构建
        </button>
        <label className="ml-[7px] flex items-center gap-[7px] self-start pr-0.5 leading-4">
          <input type="checkbox" className="size-[14px] appearance-none border border-[#b5b5b5] bg-white" />
          使用内置编译器
        </label>
      </div>
      <div className="mt-[13px] flex justify-center gap-2">
        <DialogButton primary>载荷</DialogButton>
        <DialogButton>取消</DialogButton>
        <DialogButton>帮助</DialogButton>
      </div>
    </div>
  </Dialog>
);

/* ---------- page ---------- */

const StatusBar = () => (
  <footer className="flex h-[41px] shrink-0 items-center justify-end pt-1 pr-[5px] text-[13px] text-black">
    <span className="mr-auto pl-2">
      <Icon w={5} h={17}>
        <path d="M.5 0v17M3.500 0v17" stroke="#a8a8a8" strokeDasharray="1 2" />
      </Icon>
    </span>
    <label htmlFor="pick">
      选择<span className="text-[11px]">0</span>
    </label>
    <div className="relative ml-[3px]">
      <select id="pick" className="h-[23px] w-[168px] appearance-none rounded border border-[#b8c4d2] bg-[#fcfcfc] pl-[5px] text-xs outline-none">
        <option>all</option>
      </select>
      <svg width="9" height="5" viewBox="0 0 9 5" className="pointer-events-none absolute top-2 right-2" aria-hidden="true">
        <path d="M0 0h9L4.500 5z" fill="#6d7480" />
      </svg>
    </div>
  </footer>
);

const App = () => {
  return (
    <div className="flex h-screen flex-col overflow-hidden bg-white font-['Liberation_Mono','Noto_Sans_CJK_SC',monospace]">
      <QuickBar />
      <MenuBar />
      <div className="flex min-h-0 flex-1">
        <div className="w-[25px] shrink-0 bg-[#33485f] pl-[3px]">
          <button className="h-[84px] w-[22px] rotate-180 bg-[#c0c4cc] text-[13px] leading-[22px] font-bold text-[#62718a] [writing-mode:vertical-rl]">
            Task Page
          </button>
        </div>
        <div className="flex min-w-0 flex-1 flex-col">
          <Ribbon />
          <div className="mt-[3px] flex min-h-0 flex-1">
            <Outline />
            <div className="flex min-w-0 flex-1 flex-col">
              <div className="flex min-h-0 flex-1">
                <div className="w-12 shrink-0 pl-[9px]">
                  <Strip groups={viewTools} />
                </div>
                <main className="flex min-w-0 flex-1 flex-col">
                  <ViewTabs />
                  <div className="relative flex-1 bg-[linear-gradient(to_bottom,#cdd4e3_0%,#e7ebf4_59%,#f0f1f5_68%,#ffffff_100%)]">
                    <LibraryDialog />
                    <CompileDialog />
                    <ContourPlot />
                    <Legend />
                  </div>
                </main>
                <div className="w-[41px] shrink-0 pl-[6px]">
                  <Strip groups={displayTools} />
                </div>
              </div>
              <StatusBar />
            </div>
          </div>
        </div>
      </div>
    </div>
  );
};

export default App;
